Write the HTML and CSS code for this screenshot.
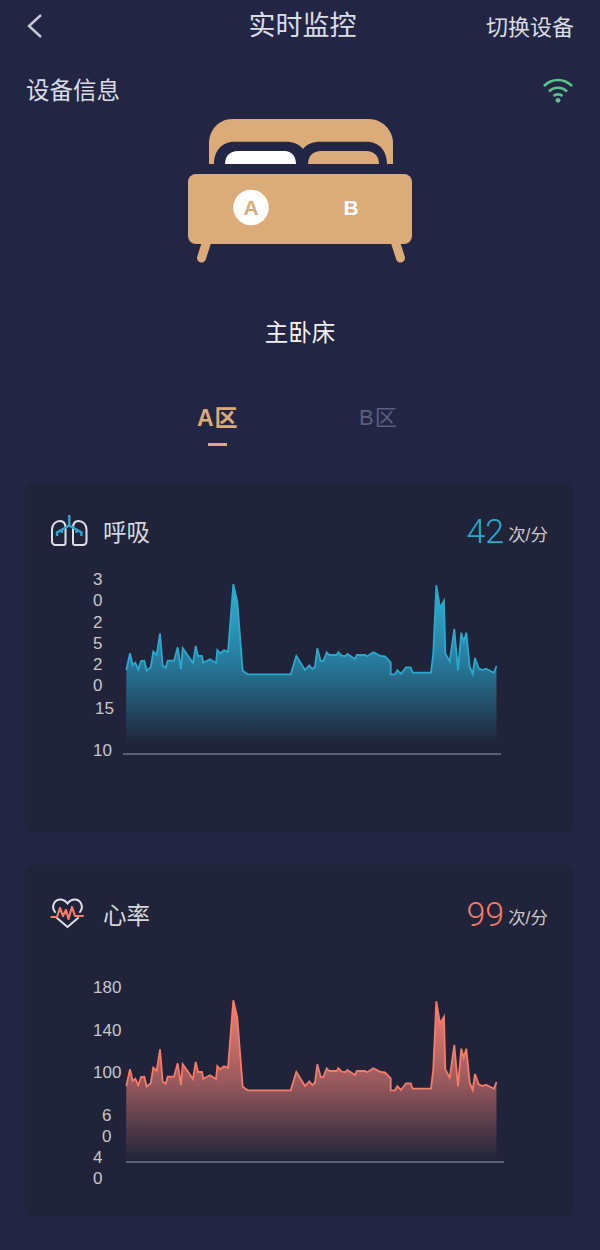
FILE: index.html
```html
<!DOCTYPE html>
<html lang="zh-CN">
    <head>
        <meta charset="UTF-8">
        <title>实时监控</title>
        <link rel="stylesheet" href="styles.css">
    </head>
    <body>
        <header class="top-bar">
            <svg class="back-icon" viewBox="0 0 15 24" width="15" height="24">
                <polyline points="14,1 2,12 14,23"/>
            </svg>
            <h1 class="page-title">实时监控</h1>
            <span class="switch-device">切换设备</span>
        </header>

        <div class="device-row">
            <span class="device-label">设备信息</span>
            <svg class="wifi-icon" viewBox="0 0 32 26" width="32" height="26">
                <path d="M2 9C10 1 22 1 30 9"/>
                <path d="M7 14.500C12 9.500 20 9.500 25 14.500"/>
                <path d="M11.500 19C14 16.800 18 16.800 20.500 19"/>
                <circle cx="16" cy="23.300" r="2.400"/>
            </svg>
        </div>

        <svg class="bed" viewBox="0 0 225 145" width="225" height="145">
            <path class="bed-tan" d="M21 45V24C21 11 31 0 44 0H181C194 0 205 11 205 24V45Z"/>
            <path class="bed-gap" d="M26 45C26 32 34 22.700 46 22.700H98C105 22.700 111 25 115 30C119 25 125 22.700 132 22.700H179C191 22.700 199 32 199 45Z"/>
            <path class="bed-white" d="M37 45C37 37 42 32 50 32H97C103 32 108 37 108 45Z"/>
            <path class="bed-tan" d="M120 45C120 37 125 32 133 32H178C186 32 191 37 191 45Z"/>
            <path class="bed-leg" d="M19 122L13.500 139"/>
            <path class="bed-leg" d="M207 122L212.500 139"/>
            <rect class="bed-tan" x="0" y="55" width="224" height="70" rx="8"/>
            <circle class="bed-white" cx="63" cy="88.500" r="17.800"/>
            <text class="bed-letter bed-letter-a" x="63" y="96">A</text>
            <text class="bed-letter bed-letter-b" x="163" y="96">B</text>
        </svg>

        <div class="bed-name">主卧床</div>

        <nav class="zone-tabs">
            <span class="zone-tab zone-active">A区</span>
            <span class="zone-tab">B区</span>
        </nav>

        <section class="card">
            <div class="card-head">
                <svg class="metric-icon" viewBox="0 0 37 32" width="37" height="32">
                    <path class="icon-line" d="M14.500 13V28A2 2 0 0 1 12.500 30H4.500A3.500 3.500 0 0 1 1 26.500V14.500C1 9.500 4.500 6 9 6C12.500 6 14.500 8.500 14.500 13Z"/>
                    <path class="icon-line" d="M22 13V28A2 2 0 0 0 24 30H32A3.500 3.500 0 0 0 35.500 26.500V14.500C35.500 9.500 32 6 27.500 6C24 6 22 8.500 22 13Z"/>
                    <path class="icon-breath" d="M18.300 0V11M18.300 10.500L6 17.500V21M18.300 10.500L30.500 17.500V21M11 14.500V18M25.500 14.500V18"/>
                </svg>
                <span class="metric-name">呼吸</span>
                <span class="metric-value breath-value">42</span>
                <span class="metric-unit">次/分</span>
            </div>
            <svg class="chart" viewBox="25 548 549 285" width="549" height="285">
                <defs>
                    <linearGradient id="breath-fade" gradientUnits="userSpaceOnUse" x1="0" y1="584" x2="0" y2="745">
                        <stop offset="0" stop-color="#2db4d6"/>
                        <stop offset="0.5" stop-color="#27789a"/>
                        <stop offset="1" stop-color="#27789a" stop-opacity="0"/>
                    </linearGradient>
                    <linearGradient id="heart-fade" gradientUnits="userSpaceOnUse" x1="0" y1="584" x2="0" y2="745">
                        <stop offset="0" stop-color="#f58170"/>
                        <stop offset="0.5" stop-color="#9a5a5e"/>
                        <stop offset="1" stop-color="#9a5a5e" stop-opacity="0"/>
                    </linearGradient>
                    <polygon id="trend-area" points="126,745 126.300,670 130,653.300 132.700,665 135.300,662.700 138.300,669.300 141,661 144.300,660.700 146.700,670.700 150.700,667.300 153.300,651.700 156.700,655 160,633.300 162.700,665.700 165.700,667.700 167.700,660.700 174,660.700 177.700,647.300 181,669 182.700,648 193,663 195.700,646 198,656 202,656 203.300,662.700 210,659.300 216,663 217.300,650 220.300,653.300 224,650.300 228,651.700 233.300,584.300 237.300,601.700 242.700,670.700 247.700,674.300 290.700,674.300 296.300,656 305,670 309.300,665.300 312.300,669 315,666.700 317.300,648.300 320.700,661 323.300,661 326.700,652.300 329.300,655 336.700,655 338.300,652.300 341.700,655.700 345.700,656 347.300,654 355,659 356.700,655 365,655 367.300,656.300 373.300,652.300 380.700,656 385,656.300 390.700,662.300 390.700,674.300 395,674.300 397.300,670.300 401,674 406,667.300 410.700,667.300 412.700,672.700 431,672.700 433.300,653.300 436.300,585.300 440,607.700 444,600.700 445.300,653.300 449.700,661.700 454.300,629 458,670.300 461.300,632.700 463.700,641.700 466.300,632.700 469.700,666.700 472.700,674 475,658 478.700,668.300 482.700,670 486,668.700 494,672.700 496.500,666 496.500,745"/>
                    <polyline id="trend-line" points="126.300,670 130,653.300 132.700,665 135.300,662.700 138.300,669.300 141,661 144.300,660.700 146.700,670.700 150.700,667.300 153.300,651.700 156.700,655 160,633.300 162.700,665.700 165.700,667.700 167.700,660.700 174,660.700 177.700,647.300 181,669 182.700,648 193,663 195.700,646 198,656 202,656 203.300,662.700 210,659.300 216,663 217.300,650 220.300,653.300 224,650.300 228,651.700 233.300,584.300 237.300,601.700 242.700,670.700 247.700,674.300 290.700,674.300 296.300,656 305,670 309.300,665.300 312.300,669 315,666.700 317.300,648.300 320.700,661 323.300,661 326.700,652.300 329.300,655 336.700,655 338.300,652.300 341.700,655.700 345.700,656 347.300,654 355,659 356.700,655 365,655 367.300,656.300 373.300,652.300 380.700,656 385,656.300 390.700,662.300 390.700,674.300 395,674.300 397.300,670.300 401,674 406,667.300 410.700,667.300 412.700,672.700 431,672.700 433.300,653.300 436.300,585.300 440,607.700 444,600.700 445.300,653.300 449.700,661.700 454.300,629 458,670.300 461.300,632.700 463.700,641.700 466.300,632.700 469.700,666.700 472.700,674 475,658 478.700,668.300 482.700,670 486,668.700 494,672.700 496.500,666"/>
                </defs>
                <text class="axis-text" x="93" y="585">3</text>
                <text class="axis-text" x="93" y="606">0</text>
                <text class="axis-text" x="93" y="628">2</text>
                <text class="axis-text" x="93" y="649">5</text>
                <text class="axis-text" x="93" y="670">2</text>
                <text class="axis-text" x="93" y="691">0</text>
                <text class="axis-text" x="95" y="714">15</text>
                <text class="axis-text" x="93" y="756">10</text>
                <use href="#trend-area" fill="url(#breath-fade)"/>
                <use class="breath-line" href="#trend-line"/>
                <line class="axis-line" x1="123" y1="754" x2="501" y2="754"/>
            </svg>
        </section>

        <section class="card">
            <div class="card-head">
                <svg class="metric-icon" viewBox="0 0 37 32" width="37" height="32">
                    <path class="icon-line" d="M4 14C0 9 3 1 10 1.500C13 1.700 15 3.500 16.500 5.500C18 3.500 20 1.700 23 1.500C30 1 33 9 29 14"/>
                    <path class="icon-line" d="M6 20L16.500 29L27 20"/>
                    <path class="icon-heart" d="M0.500 19H6L9 10L12 18L15 12L17.500 21L21 9L24 18H32"/>
                </svg>
                <span class="metric-name">心率</span>
                <span class="metric-value heart-value">99</span>
                <span class="metric-unit">次/分</span>
            </div>
            <svg class="chart" viewBox="25 515 549 286" width="549" height="286">
                <text class="axis-text" x="93" y="577">180</text>
                <text class="axis-text" x="93" y="620">140</text>
                <text class="axis-text" x="93" y="662">100</text>
                <text class="axis-text" x="102" y="705">6</text>
                <text class="axis-text" x="102" y="726">0</text>
                <text class="axis-text" x="93" y="747">4</text>
                <text class="axis-text" x="93" y="768">0</text>
                <use href="#trend-area" fill="url(#heart-fade)"/>
                <use class="heart-line" href="#trend-line"/>
                <line class="axis-line" x1="126" y1="746" x2="504" y2="746"/>
            </svg>
        </section>
    </body>
</html>
```

FILE: styles.css
```css
* {
    padding: 0;
    margin: 0;
    box-sizing: border-box;
}
body {
    background-color: #222644;
    color: #dcdde4;
    font-family: "Liberation Sans", "Noto Sans CJK SC", sans-serif;
    height: 1250px;
    overflow: hidden;
}
.top-bar {
    display: grid;
    grid-template-columns: 1fr auto 1fr;
    align-items: center;
    height: 50px;
    padding: 2px 26px 0 27px;
}
.back-icon {
    fill: none;
    stroke: #c9cad2;
    stroke-width: 2.400;
}
.page-title {
    font-size: 27px;
    font-weight: 400;
    line-height: 36px;
    margin-left: 4px;
}
.switch-device {
    font-size: 22px;
    justify-self: end;
    margin-top: -2px;
}
.device-row {
    display: flex;
    justify-content: space-between;
    align-items: center;
    height: 34px;
    margin-top: 23px;
    padding: 0 26px;
}
.device-label {
    font-size: 23.500px;
    margin-top: -2px;
}
.wifi-icon {
    fill: none;
    stroke: #5cc28b;
    stroke-width: 2.600;
}
.wifi-icon circle {
    fill: #5cc28b;
    stroke: none;
}
.bed {
    display: block;
    margin: 12px 0 0 188px;
}
.bed-tan {
    fill: #dcab7a;
}
.bed-gap {
    fill: #222644;
}
.bed-white {
    fill: #ffffff;
}
.bed-leg {
    fill: none;
    stroke: #dcab7a;
    stroke-width: 9;
    stroke-linecap: round;
}
.bed-letter {
    font-size: 21px;
    font-weight: 700;
    text-anchor: middle;
}
.bed-letter-a {
    fill: #dcab7a;
}
.bed-letter-b {
    fill: #ffffff;
}
.bed-name {
    margin-top: 52px;
    text-align: center;
    font-size: 23.500px;
    line-height: 34px;
    color: #f2f2f5;
}
.zone-tabs {
    display: flex;
    height: 82px;
    margin-top: 50px;
    padding-left: 197px;
    gap: 121px;
}
.zone-tab {
    position: relative;
    font-size: 22px;
    letter-spacing: 1px;
    line-height: 36px;
    width: 41px;
    white-space: nowrap;
    color: #5c5f7c;
}
.zone-active {
    font-size: 23px;
    color: #dcab7a;
    font-weight: 700;
}
.zone-active::after {
    content: "";
    position: absolute;
    left: 11px;
    top: 43px;
    width: 19px;
    height: 3px;
    background: #dcab7a;
}
.card {
    width: 549px;
    margin: 0 0 32px 25px;
    background: #202339;
    border-radius: 12px;
}
.card-head {
    display: flex;
    align-items: center;
    height: 66px;
    padding: 32px 26px 0;
}
.metric-icon {
    fill: none;
    overflow: visible;
}
.icon-line {
    stroke: #dfe0e6;
    stroke-width: 2;
    fill: none;
    stroke-linecap: round;
}
.icon-breath {
    stroke: #2ba9cd;
    stroke-width: 2.400;
}
.icon-heart {
    stroke: #f47c68;
    stroke-width: 2.200;
    stroke-linecap: round;
    stroke-linejoin: round;
}
.metric-name {
    font-size: 23.500px;
    margin-left: 15px;
    color: #d6d7de;
}
.metric-value {
    margin-left: auto;
    font-family: Roboto, "Liberation Sans", sans-serif;
    font-weight: 300;
    font-size: 34px;
}
.breath-value {
    color: #2ba9cd;
}
.heart-value {
    color: #f47c68;
}
.metric-unit {
    font-size: 17.500px;
    margin: 4px 0 0 4px;
    color: #c8c8cc;
}
.chart {
    display: block;
}
.axis-text {
    font-size: 17px;
    fill: #c8c8cc;
}
.axis-line {
    stroke: #5d5f74;
    stroke-width: 2;
}
.breath-line, .heart-line {
    fill: none;
    stroke-width: 1.800;
}
.breath-line {
    stroke: #2ba9cd;
}
.heart-line {
    stroke: #f47c68;
}
```
